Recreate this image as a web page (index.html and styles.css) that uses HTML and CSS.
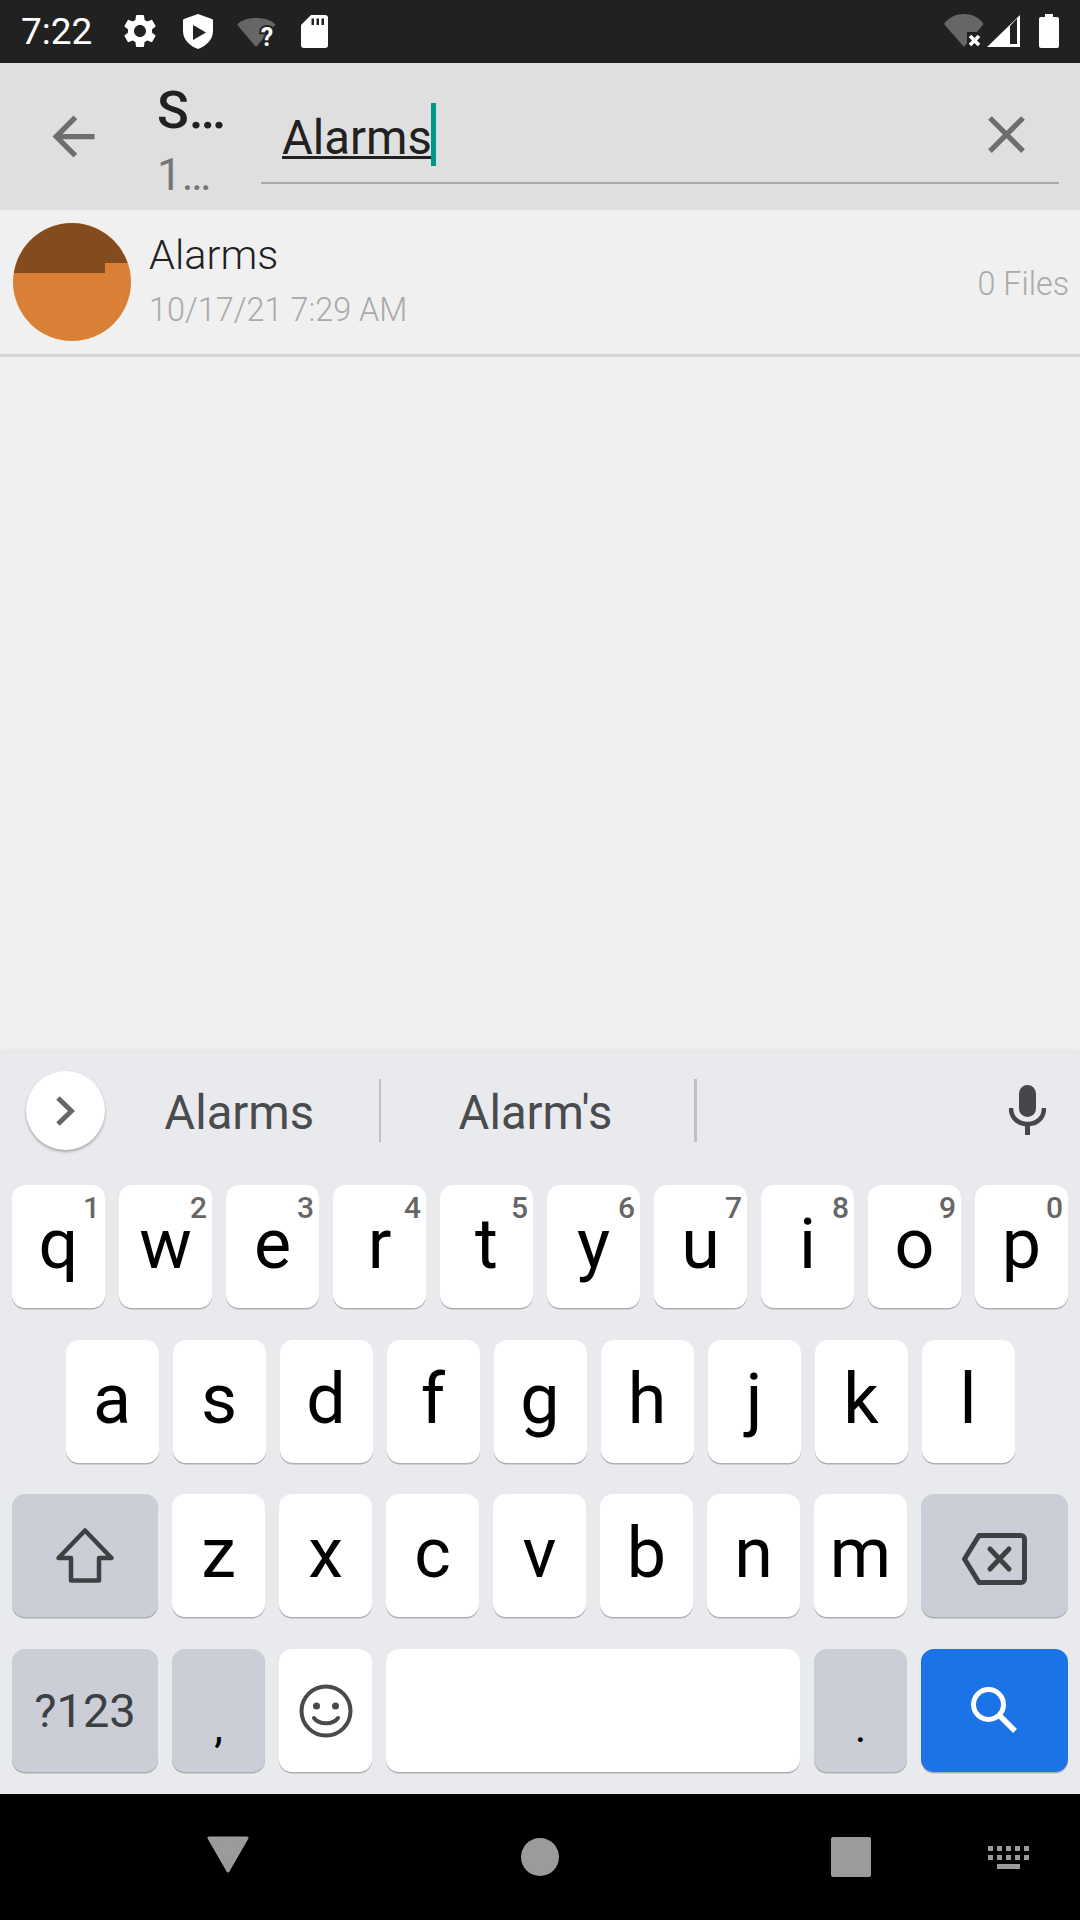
FILE: index.html
```html
<!DOCTYPE html>
<html lang="en">
<head>
<meta charset="utf-8">
<title>Search</title>
<link rel="stylesheet" href="styles.css">
</head>
<body>
<div class="screen">
  <header class="status">
    <span class="clock">7:22</span>
    <svg class="st-gear" viewBox="0 0 24 24" width="40" height="40"><path fill="#fff" d="M19.14 12.94c.04-.3.06-.61.06-.94 0-.32-.02-.64-.07-.94l2.03-1.58c.18-.14.23-.41.12-.61l-1.92-3.32c-.12-.22-.37-.29-.59-.22l-2.39.96c-.5-.38-1.03-.7-1.62-.94l-.36-2.54c-.04-.24-.24-.41-.48-.41h-3.84c-.24 0-.43.17-.47.41l-.36 2.54c-.59.24-1.13.57-1.62.94l-2.39-.96c-.22-.08-.47 0-.59.22L2.74 8.87c-.12.21-.08.47.12.61l2.03 1.58c-.05.3-.09.63-.09.94s.02.64.07.94l-2.03 1.58c-.18.14-.23.41-.12.61l1.92 3.32c.12.22.37.29.59.22l2.39-.96c.5.38 1.03.7 1.62.94l.36 2.54c.05.24.24.41.48.41h3.84c.24 0 .44-.17.47-.41l.36-2.54c.59-.24 1.13-.56 1.62-.94l2.39.96c.22.08.47 0 .59-.22l1.92-3.32c.12-.22.07-.47-.12-.61l-2.01-1.58zM12 15.6c-1.98 0-3.6-1.62-3.6-3.6s1.62-3.6 3.6-3.6 3.6 1.62 3.6 3.6-1.62 3.6-3.6 3.6z"/></svg>
    <svg class="st-shield" viewBox="0 0 30 35" width="30" height="35"><path fill="#fff" fill-rule="evenodd" d="M15 0 L29 5 Q30 5.4 30 6.5 V17 C30 26 23 32 15 35 C7 32 0 26 0 17 V6.5 Q0 5.4 1 5 Z M10 11 V26 L23 18.5 Z"/></svg>
    <svg class="st-wifi" viewBox="0 0 39 42" width="39" height="42"><path fill="#666" d="M0 7.5 C5 3 11 1 19 1 C27 1 34 3 38.5 7.5 L19 30 Z"/><text class="wifi-q" x="30" y="29" text-anchor="middle">?</text></svg>
    <svg class="st-sd" viewBox="0 0 27 33" width="27" height="33"><path fill="#fff" fill-rule="evenodd" d="M10 0 H24 a3 3 0 0 1 3 3 V30 a3 3 0 0 1 -3 3 H3 a3 3 0 0 1 -3 -3 V10 Z M10.5 3.5 V10 H13 V3.5 Z M15.5 3.5 V10 H18 V3.5 Z M20.5 3.5 V10 H23 V3.5 Z"/></svg>
    <span class="status-fill"></span>
    <svg class="st-wifi2" viewBox="0 0 40 34" width="40" height="34"><path fill="#666" d="M0 10 C5 3 12 0 20 0 C28 0 35 3 39.5 10 L33 18 H23 V29 L20 33 Z"/><path stroke="#fff" stroke-width="3.6" fill="none" d="M26 22 L35 31 M35 22 L26 31"/></svg>
    <svg class="st-signal" viewBox="0 0 33 32" width="33" height="32"><path fill="#fff" fill-rule="evenodd" d="M33 0 V32 H0 Z M23 11 V29 H30 V3.5 Z"/></svg>
    <svg class="st-batt" viewBox="0 0 20 34" width="20" height="34"><path fill="#fff" d="M6 0 H14 V3 H18 a2 2 0 0 1 2 2 V32 a2 2 0 0 1 -2 2 H2 a2 2 0 0 1 -2 -2 V5 a2 2 0 0 1 2 -2 H6 Z"/></svg>
  </header>

  <section class="toolbar">
    <svg class="tb-back" viewBox="0 0 24 24" width="63" height="63"><path fill="#6e6e6e" d="M20 11H7.83l5.59-5.59L12 4l-8 8 8 8 1.41-1.41L7.83 13H20v-2z"/></svg>
    <div class="tb-titles">
      <div class="tb-title">S…</div>
      <div class="tb-sub">1…</div>
    </div>
    <div class="search-field">
      <span class="search-text">Alarms</span><span class="caret"></span>
      <svg class="tb-close" viewBox="0 0 24 24" width="63" height="63"><path fill="#6e6e6e" d="M19 6.41L17.59 5 12 10.59 6.41 5 5 6.41 10.59 12 5 17.59 6.41 19 12 13.41 17.59 19 19 17.59 13.41 12z"/></svg>
    </div>
  </section>

  <main class="list">
    <article class="row">
      <svg class="avatar" viewBox="0 0 118 118" width="118" height="118"><circle cx="59" cy="59" r="59" fill="#d98036"/><path fill="#824c1f" d="M1 50 H92 V40 H114.5 A59 59 0 0 0 59 0 A59 59 0 0 0 1 50 Z"/></svg>
      <div class="row-text">
        <div class="row-name">Alarms</div>
        <div class="row-date">10/17/21 7:29 AM</div>
      </div>
      <div class="row-count">0 Files</div>
    </article>
  </main>

  <section class="keyboard">
    <div class="strip">
      <span class="strip-btn">
        <svg viewBox="0 0 19 30" width="19" height="30"><path fill="none" stroke="#666" stroke-width="5" d="M2 2 L15.5 15 L2 28"/></svg>
      </span>
      <span class="sug sug-a">Alarms</span>
      <span class="strip-div"></span>
      <span class="sug sug-b">Alarm's</span>
      <span class="strip-div"></span>
      <span class="strip-fill"></span>
      <svg class="strip-mic" viewBox="0 0 37 50" width="37" height="50"><rect x="10" y="0" width="17" height="32" rx="8.5" fill="#46474a"/><path fill="none" stroke="#46474a" stroke-width="4.5" d="M2 23 C2 33 9 39 18.5 39 C28 39 35 33 35 23"/><rect x="16" y="38" width="5" height="12" fill="#46474a"/></svg>
    </div>
    <div class="keys">
      <div class="key-row">
        <div class="key">q<sup class="hint">1</sup></div>
        <div class="key">w<sup class="hint">2</sup></div>
        <div class="key">e<sup class="hint">3</sup></div>
        <div class="key">r<sup class="hint">4</sup></div>
        <div class="key">t<sup class="hint">5</sup></div>
        <div class="key">y<sup class="hint">6</sup></div>
        <div class="key">u<sup class="hint">7</sup></div>
        <div class="key">i<sup class="hint">8</sup></div>
        <div class="key">o<sup class="hint">9</sup></div>
        <div class="key">p<sup class="hint">0</sup></div>
      </div>
      <div class="key-row">
        <div class="key">a</div><div class="key">s</div><div class="key">d</div><div class="key">f</div><div class="key">g</div><div class="key">h</div><div class="key">j</div><div class="key">k</div><div class="key">l</div>
      </div>
      <div class="key-row">
        <div class="key key-wide key-func key-icon">
          <svg viewBox="0 0 58 55" width="58" height="55"><path fill="none" stroke="#3f4043" stroke-width="4.5" stroke-linejoin="round" d="M29 2.500 L55.500 30 H43 V52.500 H15 V30 H2.500 Z"/></svg>
        </div>
        <div class="key">z</div><div class="key">x</div><div class="key">c</div><div class="key">v</div><div class="key">b</div><div class="key">n</div><div class="key">m</div>
        <div class="key key-wide key-func key-icon key-del">
          <svg viewBox="0 0 65 52" width="65" height="52"><path fill="none" stroke="#3f4043" stroke-width="5" stroke-linejoin="round" d="M17 2.5 H59 a3.5 3.5 0 0 1 3.500 3.500 V46 a3.500 3.500 0 0 1 -3.500 3.500 H17 L2.500 26 Z"/><path fill="none" stroke="#3f4043" stroke-width="5" stroke-linecap="round" d="M28 16 L47 36 M47 16 L28 36"/></svg>
        </div>
      </div>
      <div class="key-row">
        <div class="key key-wide key-func key-sym">?123</div>
        <div class="key key-func key-punct">,</div>
        <div class="key key-icon">
          <svg viewBox="0 0 54 54" width="54" height="54"><circle cx="27" cy="27" r="24.500" fill="none" stroke="#4a4a4d" stroke-width="4"/><circle cx="17.500" cy="22" r="3.500" fill="#4a4a4d"/><circle cx="36.500" cy="22" r="3.500" fill="#4a4a4d"/><path fill="none" stroke="#4a4a4d" stroke-width="4" stroke-linecap="round" d="M15 34 C20 41 34 41 39 34"/></svg>
        </div>
        <div class="key key-space"></div>
        <div class="key key-func key-punct">.</div>
        <div class="key key-wide key-go">
          <svg viewBox="0 0 46 46" width="46" height="46"><circle cx="17.500" cy="17.500" r="15" fill="none" stroke="#fff" stroke-width="5"/><path stroke="#fff" stroke-width="5.500" d="M28 28 L44 44"/></svg>
        </div>
      </div>
    </div>
  </section>

  <nav class="navbar">
    <svg class="nav-back" viewBox="0 0 42 37" width="42" height="37"><path fill="#9b9b9b" stroke="#9b9b9b" stroke-width="3" stroke-linejoin="round" d="M2 2 H40 L21 35 Z"/></svg>
    <span class="nav-home"></span>
    <span class="nav-recent"></span>
    <svg class="nav-kbd" viewBox="0 0 41 23" width="41" height="23"><path fill="#9b9b9b" d="M0 0h5v5H0zM9 0h5v5H9zM18 0h5v5h-5zM27 0h5v5h-5zM36 0h5v5h-5zM0 9h5v5H0zM9 9h5v5H9zM18 9h5v5h-5zM27 9h5v5h-5zM36 9h5v5h-5zM9 18h23v5H9z"/></svg>
  </nav>
</div>
</body>
</html>
```

FILE: styles.css
```css
* { box-sizing: border-box; }
html, body { margin: 0; padding: 0; }
body { width: 1080px; height: 1920px; overflow: hidden; font-family: Roboto, "Liberation Sans", sans-serif; }
.screen { width: 1080px; height: 1920px; display: flex; flex-direction: column; background: #f0f0f0; }

.status { height: 63px; flex: none; background: #212121; display: flex; align-items: flex-start; padding-left: 21px; padding-right: 21px; }
.clock { width: 99px; color: #fff; font-size: 37px; line-height: 63px; }
.st-gear { margin-top: 11px; }
.st-shield { margin-top: 14px; margin-left: 23px; }
.st-wifi { margin-top: 17px; margin-left: 24px; }
.wifi-q { font-family: Roboto, sans-serif; font-weight: 700; font-size: 25px; fill: #fff; stroke: #212121; stroke-width: 4px; paint-order: stroke; }
.st-sd { margin-top: 15px; margin-left: 25px; }
.status-fill { flex: 1; }
.st-wifi2 { margin-top: 14px; }
.st-signal { margin-top: 15px; margin-left: 3px; }
.st-batt { margin-top: 14px; margin-left: 19px; }

.toolbar { height: 147px; flex: none; background: #dfdfdf; display: flex; align-items: flex-start; }
.tb-back { margin-left: 42px; margin-top: 41.500px; flex: none; }
.tb-titles { margin-left: 52px; width: 104px; flex: none; }
.tb-title { font-size: 52.500px; font-weight: 500; line-height: 62px; margin-top: 16px; color: #212121; }
.tb-sub { font-size: 44px; line-height: 50px; margin-top: 9px; color: #757575; }
.search-field { width: 798px; height: 81px; margin-top: 40px; border-bottom: 2px solid #a9a9a9; display: flex; align-items: flex-start; padding-left: 21px; flex: none; }
.search-text { font-size: 47.250px; line-height: 56px; color: #212121; text-decoration: underline; text-decoration-thickness: 3px; text-underline-offset: 2px; margin-top: 7px; }
.caret { width: 5px; height: 63px; background: #009688; margin-left: -1px; }
.tb-close { margin-left: auto; margin-right: 21.500px; flex: none; }

.list { flex: 1; }
.row { height: 147px; border-bottom: 3px solid #d6d6d6; display: flex; align-items: flex-start; padding-left: 13px; padding-right: 11px; }
.avatar { margin-top: 13px; flex: none; }
.row-text { margin-left: 18px; flex: 1; }
.row-name { font-size: 41.500px; font-weight: 300; line-height: 50px; margin-top: 20px; color: #212121; }
.row-date { font-size: 32.400px; font-weight: 300; line-height: 40px; margin-top: 10px; color: #aaa; }
.row-count { font-size: 32.300px; font-weight: 300; line-height: 40px; margin-top: 54px; color: #aaa; }

.keyboard { height: 741px; flex: none; background: #e8eaed; box-shadow: 0 -3px 6px rgba(0,0,0,.05); display: flex; flex-direction: column; }
.strip { height: 132px; flex: none; display: flex; align-items: flex-start; padding-left: 26px; }
.strip-btn { width: 79px; height: 79px; margin-top: 18px; border-radius: 50%; background: #fff; box-shadow: 0 2px 3px rgba(0,0,0,.28); display: flex; align-items: center; justify-content: center; flex: none; }
.sug { font-size: 47.250px; line-height: 56px; color: #4a4b4e; margin-top: 32px; text-align: center; flex: none; }
.sug-a { width: 273.500px; padding-right: 5px; }
.sug-b { width: 313px; padding-right: 4px; }
.strip-div { width: 2.500px; height: 63px; margin-top: 26px; background: #c0c1c4; flex: none; }
.strip-fill { flex: 1; }
.strip-mic { margin-top: 32px; margin-right: 34px; flex: none; }

.keys { display: flex; flex-direction: column; gap: 31.700px; padding: 0 12px; }
.key-row { display: flex; justify-content: center; gap: 14px; height: 123px; }
.key { flex: 0 0 93px; min-width: 0; height: 123px; border-radius: 13px; background: #fff; box-shadow: 0 1.500px 0 #aeafb1; color: #000; font-size: 70px; display: flex; align-items: center; justify-content: center; padding-bottom: 5px; position: relative; line-height: 1; }
.key-wide { flex: 0 0 146px; }
.key-wide:last-child { flex-basis: 147px; }
.key-func { background: #cbced6; }
.key-icon { padding-bottom: 0; }
.key-del { padding-top: 7px; padding-right: 1px; }
.key-space { flex: 0 0 414px; }
.key-go { background: #1b73e8; padding-bottom: 2px; padding-right: 2px; }
.key-sym { font-size: 47px; color: #3c4043; padding-bottom: 0; }
.key-punct { font-size: 44px; padding-top: 32px; padding-bottom: 0; }
.hint { position: absolute; right: 5px; top: 7px; font-size: 30px; font-weight: 500; line-height: 32px; color: #666; vertical-align: baseline; }

.navbar { height: 126px; flex: none; background: #000; display: flex; align-items: flex-start; padding-left: 207px; }
.nav-back { margin-top: 42px; flex: none; }
.nav-home { width: 38px; height: 38px; border-radius: 50%; background: #9b9b9b; margin-top: 44px; margin-left: 272px; flex: none; }
.nav-recent { width: 40px; height: 40px; border-radius: 2px; background: #9b9b9b; margin-top: 43px; margin-left: 272px; flex: none; }
.nav-kbd { margin-top: 52px; margin-left: 117px; flex: none; }
```
